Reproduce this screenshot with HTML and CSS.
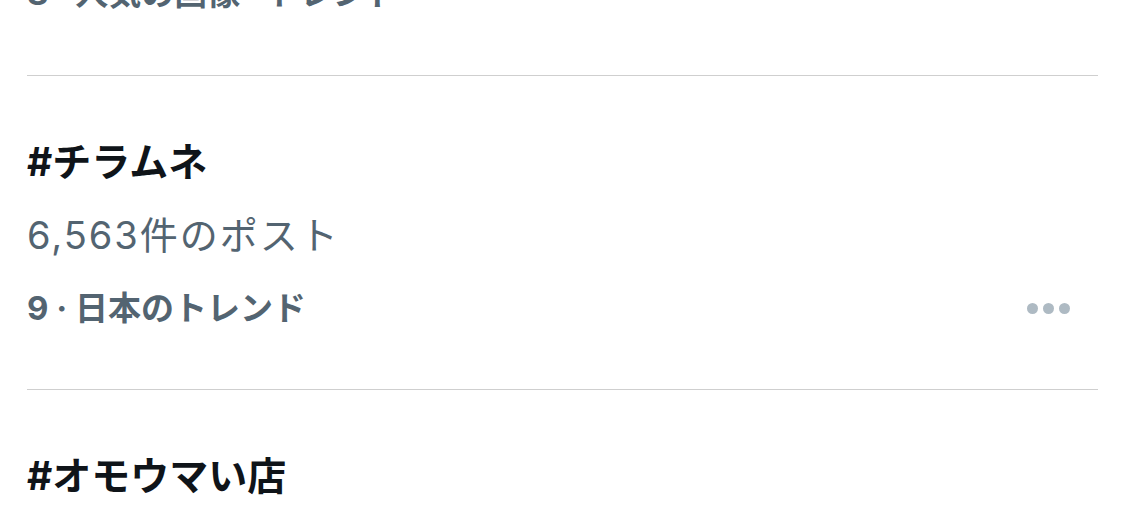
FILE: index.html
```html
<!DOCTYPE html>
<html lang="ja">
<head>
  <meta charset="UTF-8" />
  <meta name="viewport" content="width=device-width, initial-scale=1.0"/>
  <title>トレンド</title>
  <link rel="stylesheet" href="styles.css">
</head>
<body>
  <div class="trends">
    <div class="trend first">
      <div class="context">
        <span>8 · 人気の画像 · トレンド</span>
      </div>
    </div>

    <div class="trend">
      <div class="title">#チラムネ</div>
      <div class="count">6,563件のポスト</div>
      <div class="context">
        <span>9 · 日本のトレンド</span>
        <div class="more">
          <span class="dot"></span><span class="dot"></span><span class="dot"></span>
        </div>
      </div>
    </div>

    <div class="trend">
      <div class="title">#オモウマい店</div>
    </div>
  </div>
</body>
</html>
```

FILE: styles.css
```css
body {
  margin: 0;
  background: #fff;
  font-family: Inter, "Noto Sans CJK JP", sans-serif;
  overflow: hidden;
}

.trends {
  padding: 0 26px 0 27px;
}

.trend {
  border-top: 1px solid #cfcfcf;
  padding: 61px 0 56px;
}

.trend.first {
  border-top: none;
  margin-top: -32px;
  padding: 0 0 57px;
}

.title {
  color: #0f1419;
  font-size: 39px;
  font-weight: 700;
  line-height: 50px;
}

.count {
  color: #536471;
  font-size: 38px;
  letter-spacing: 2px;
  line-height: 50px;
  margin-top: 23px;
}

.context {
  color: #536471;
  font-size: 33px;
  font-weight: 700;
  line-height: 50px;
  display: flex;
  align-items: center;
  justify-content: space-between;
}

.count + .context {
  margin-top: 23px;
}

.more {
  display: flex;
  gap: 5px;
  margin-right: 28px;
}

.dot {
  width: 11px;
  height: 11px;
  border-radius: 50%;
  background: #aebac3;
}
```
